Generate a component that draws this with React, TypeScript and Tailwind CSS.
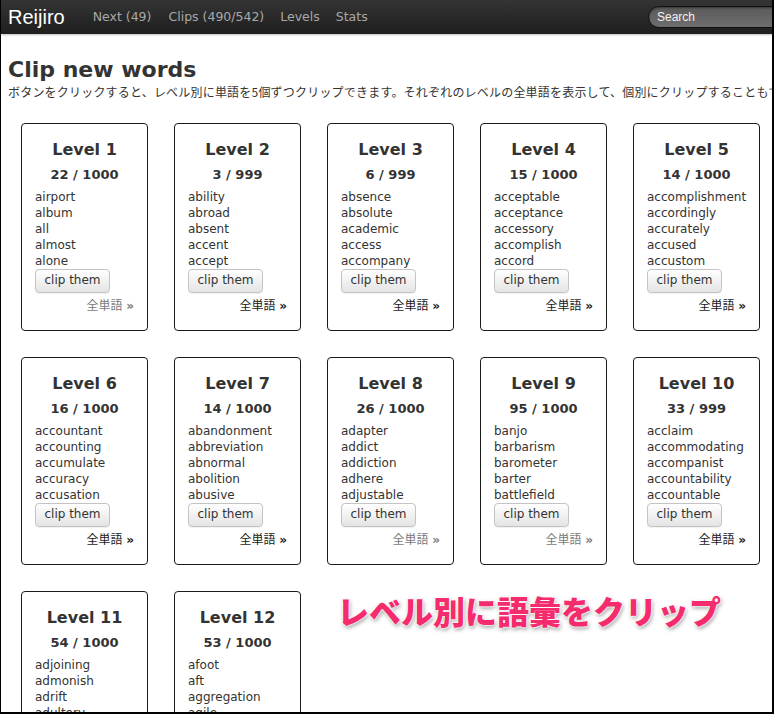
import React from "react";

type Level = { n: number; count: string; words: string[]; visited: boolean };

const levels: Level[] = [
  { n: 1, count: "22 / 1000", words: ["airport", "album", "all", "almost", "alone"], visited: true },
  { n: 2, count: "3 / 999", words: ["ability", "abroad", "absent", "accent", "accept"], visited: false },
  { n: 3, count: "6 / 999", words: ["absence", "absolute", "academic", "access", "accompany"], visited: false },
  { n: 4, count: "15 / 1000", words: ["acceptable", "acceptance", "accessory", "accomplish", "accord"], visited: false },
  { n: 5, count: "14 / 1000", words: ["accomplishment", "accordingly", "accurately", "accused", "accustom"], visited: false },
  { n: 6, count: "16 / 1000", words: ["accountant", "accounting", "accumulate", "accuracy", "accusation"], visited: false },
  { n: 7, count: "14 / 1000", words: ["abandonment", "abbreviation", "abnormal", "abolition", "abusive"], visited: false },
  { n: 8, count: "26 / 1000", words: ["adapter", "addict", "addiction", "adhere", "adjustable"], visited: true },
  { n: 9, count: "95 / 1000", words: ["banjo", "barbarism", "barometer", "barter", "battlefield"], visited: true },
  { n: 10, count: "33 / 999", words: ["acclaim", "accommodating", "accompanist", "accountability", "accountable"], visited: false },
  { n: 11, count: "54 / 1000", words: ["adjoining", "admonish", "adrift", "adultery", "advent"], visited: false },
  { n: 12, count: "53 / 1000", words: ["afoot", "aft", "aggregation", "agile", "agitate"], visited: false },
];

function Card({ level }: { level: Level }) {
  return (
    <div className="w-[127px] h-[208px] border border-[#1a1a1a] rounded-[4px] px-[13px] pt-[16px] flex flex-col bg-white">
      <h3 className="text-center text-[16px] leading-[20px] font-bold text-[#333]">Level {level.n}</h3>
      <h5 className="text-center text-[13px] leading-[16px] font-bold text-[#333] mt-[7px]">{level.count}</h5>
      <ul className="mt-[6px] text-[12px] leading-[16px] text-[#333]">
        {level.words.map((w) => (
          <li key={w} className="whitespace-nowrap">{w}</li>
        ))}
      </ul>
      <button className="h-[24px] w-[75px] flex items-start justify-center pt-[1px] border border-[#c4c4c4] rounded-[4px] bg-gradient-to-b from-white to-[#e4e4e4] text-[12px] leading-[18px] text-[#333] shadow-[0_1px_1px_rgba(0,0,0,0.06)]">
        clip them
      </button>
      <div
        className={
          "mt-[5px] text-right text-[12px] leading-[16px] whitespace-nowrap " +
          (level.visited ? "text-[#7a7a7a]" : "text-[#1a1a1a]")
        }
      >
        全単語 <span className="font-bold">»</span>
      </div>
    </div>
  );
}

export default function App() {
  return (
    <div
      className="relative w-[774px] h-[714px] overflow-hidden bg-white border-l border-r-2 border-b-2 border-black"
      style={{ fontFamily: '"DejaVu Sans", "Noto Sans CJK JP", sans-serif' }}
    >
      <nav className="h-[34px] bg-gradient-to-b from-[#343434] to-[#1f1f1f] flex items-center pl-[7px] shadow-[0_1px_2px_rgba(0,0,0,0.25)] overflow-hidden">
        <span className="text-white text-[20px] leading-[34px] font-['Liberation_Sans',sans-serif] mr-[19px]">Reijiro</span>
        <div className="flex text-[12.5px] text-[#a8a8a8]">
          <span className="px-[9px]">Next (49)</span>
          <span className="px-[8px]">Clips (490/542)</span>
          <span className="px-[8px]">Levels</span>
          <span className="px-[8px]">Stats</span>
        </div>
        <div className="flex-1" />
        <div className="w-[124px] shrink-0 overflow-hidden h-[22px]">
          <div className="w-[180px] h-[22px] rounded-full border border-[#111] bg-gradient-to-b from-[#5a5a5a] to-[#6e6e6e] shadow-[inset_0_1px_2px_rgba(0,0,0,0.4)] pl-[8px] text-[12px] leading-[20px] text-[#f0f0f0] font-['Liberation_Sans',sans-serif]">
            Search
          </div>
        </div>
      </nav>
      <main className="pl-[7px]">
        <h1 className="pt-[22px] text-[22px] leading-[28px] font-bold text-[#333]">Clip new words</h1>
        <p className="text-[12px] leading-[16px] tracking-[0.2px] text-[#333] whitespace-nowrap font-['Noto_Sans_CJK_JP',sans-serif]">
          ボタンをクリックすると、レベル別に単語を5個ずつクリップできます。それぞれのレベルの全単語を表示して、個別にクリップすることもできます。
        </p>
        <div className="ml-[13px] mt-[23px] grid grid-cols-[repeat(5,127px)] gap-x-[26px] gap-y-[26px]">
          {levels.map((l) => (
            <Card key={l.n} level={l} />
          ))}
        </div>
      </main>
      <div className="absolute left-[336px] top-[593px] text-[32px] leading-[34px] font-black text-[#f42b6c] whitespace-nowrap font-['Noto_Sans_CJK_JP',sans-serif] [text-shadow:0_0_2px_#fff,0_0_2px_#fff,0_0_3px_#fff,1px_2px_4px_rgba(0,0,0,0.45)]">
        レベル別に語彙をクリップ
      </div>
    </div>
  );
}
